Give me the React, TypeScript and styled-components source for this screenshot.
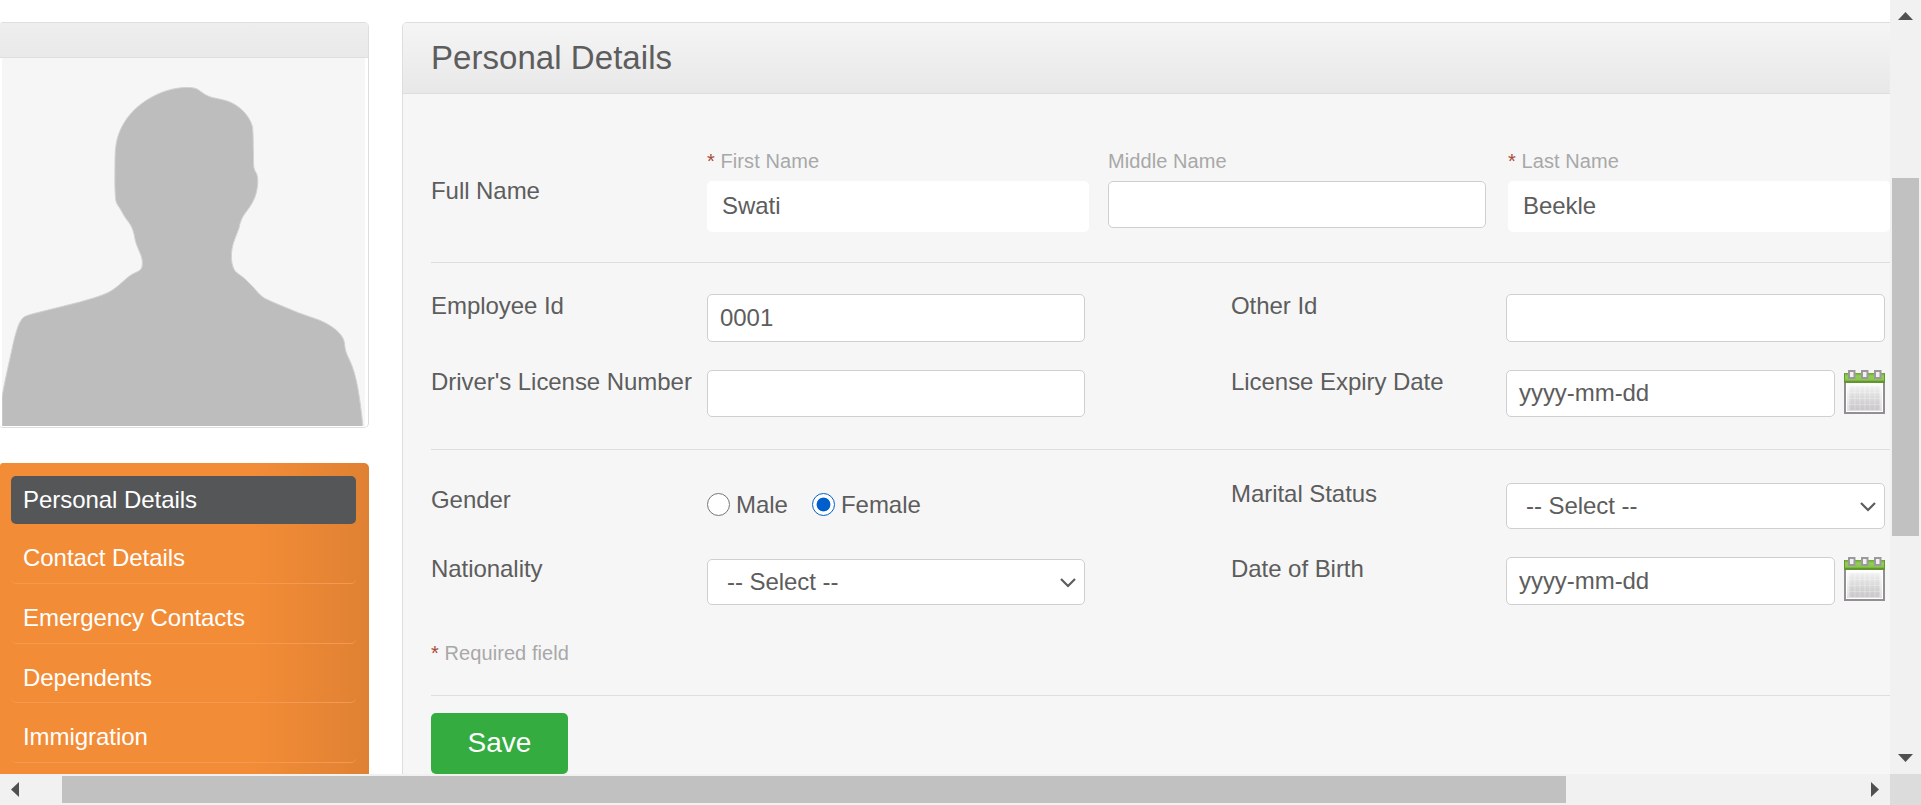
import React from 'react';
import styled, { createGlobalStyle } from 'styled-components';

const GlobalStyle = createGlobalStyle`
  * { box-sizing: border-box; }
  body {
    margin: 0;
    background: #fff;
    overflow: hidden;
    font-family: Arial, "Liberation Sans", sans-serif;
    font-size: 24px;
    line-height: 28px;
    letter-spacing: -0.05px;
    color: #5d5d5d;
  }
`;

const Viewport = styled.div`
  display: grid;
  grid-template-columns: 1890px 31px;
  grid-template-rows: 774px 31px;
  width: 1921px;
  height: 805px;
  overflow: hidden;
`;

const Page = styled.main`
  display: flex;
  align-items: flex-start;
  gap: 33px;
  padding-top: 22px;
  overflow: hidden;
`;

const Sidebar = styled.aside`
  flex: none;
  width: 369px;
`;

const PhotoCard = styled.section`
  height: 406px;
  margin-bottom: 35px;
  border: 1px solid #dedede;
  border-left: 0;
  border-radius: 3px 5px 5px 3px;
  background: #fff;
`;

const PhotoHeader = styled.div`
  height: 35px;
  border-bottom: 1px solid #dedede;
  border-radius: 2px 4px 0 0;
  background: linear-gradient(#eeeeee, #e9e9e9);
`;

const Photo = styled.svg`
  display: block;
  margin-left: 2px;
`;

const Menu = styled.nav`
  height: 420px;
  padding: 13px 13px 0 11px;
  border-radius: 3px 5px 0 0;
  background: linear-gradient(to right, #f38c37 0, #f38c37 252px, #df8133 369px);
`;

const MenuItem = styled.a<{ $active?: boolean }>`
  display: block;
  height: ${(p) => (p.$active ? '48px' : '59.8px')};
  padding: ${(p) => (p.$active ? '10px' : '20px')} 12px 0;
  border-bottom: ${(p) => (p.$active ? '0' : '1px solid #f49a50')};
  border-radius: 5px;
  background: ${(p) => (p.$active ? '#555658' : 'transparent')};
  color: #fff;
`;

const Panel = styled.section`
  flex: none;
  width: 1600px;
  height: 900px;
  border: 1px solid #dedede;
  border-radius: 5px 5px 0 0;
  background: #f6f6f6;
`;

const PanelTitle = styled.h1`
  height: 71px;
  margin: 0;
  padding: 16px 28px 0;
  border-bottom: 1px solid #dedede;
  border-radius: 4px 4px 0 0;
  background: linear-gradient(#f5f5f5, #e8e8e8);
  font-size: 33px;
  font-weight: 400;
  line-height: 38px;
  letter-spacing: 0.05px;
`;

const Form = styled.form`
  padding-left: 28px;
`;

const Section = styled.div<{ $height: number; $top: number }>`
  height: ${(p) => p.$height}px;
  padding-top: ${(p) => p.$top}px;
  border-bottom: 1px solid #dedede;
`;

const NameRow = styled.div`
  display: grid;
  grid-template-columns: 276px 401px 400px 382px;
`;

const FieldRow = styled.div<{ $height: number }>`
  display: grid;
  grid-template-columns: 276px 524px 275px 379px;
  height: ${(p) => p.$height}px;
`;

const Label = styled.label<{ $top?: number }>`
  padding-top: ${(p) => p.$top ?? 0}px;
  white-space: nowrap;
`;

const Field = styled.div<{ $top?: number }>`
  display: flex;
  align-items: flex-start;
  padding-top: ${(p) => p.$top ?? 2}px;
`;

const Hint = styled.div`
  height: 32px;
  font-size: 20px;
  line-height: 24px;
  letter-spacing: 0.08px;
  color: #a8a8a8;
`;

const Star = styled.em`
  color: #aa4935;
  font-style: normal;
`;

const TextInput = styled.input<{ $width?: number; $height?: number; $plain?: boolean }>`
  display: block;
  width: ${(p) => p.$width ?? 378}px;
  height: ${(p) => p.$height ?? 47}px;
  padding: ${(p) => (p.$plain ? '0 15px 2px' : p.$height ? '0 12px' : '0 12px 2px')};
  border: ${(p) => (p.$plain ? '0' : '1px solid #cfcfcf')};
  border-radius: 5px;
  outline: 0;
  background: #fff;
  color: #5d5d5d;
  font: inherit;
  letter-spacing: inherit;
`;

const SelectBox = styled.div<{ $width: number }>`
  display: grid;
  width: ${(p) => p.$width}px;
  align-items: center;
  & > * { grid-area: 1 / 1; }
`;

const Select = styled.select`
  width: 100%;
  height: 46px;
  padding: 0 19px;
  border: 1px solid #cfcfcf;
  border-radius: 5px;
  appearance: none;
  background: #fff;
  color: #5d5d5d;
  font: inherit;
  letter-spacing: inherit;
`;

const Chevron = styled.svg`
  justify-self: end;
  margin: 2px 9px 0 0;
  pointer-events: none;
`;

const Calendar = styled.svg`
  flex: none;
  margin-left: 9px;
`;

const Radio = styled.input`
  appearance: none;
  width: 23px;
  height: 23px;
  margin: 0 6px 0 0;
  border: 1px solid #767676;
  border-radius: 50%;
  background: #fff;
  &:checked {
    border-color: #005fcc;
    background: radial-gradient(circle, #005fcc 6.5px, #fff 7.3px);
  }
`;

const RadioText = styled.span<{ $width: number }>`
  width: ${(p) => p.$width}px;
  margin-top: -2px;
`;

const SaveButton = styled.button`
  display: block;
  width: 137px;
  height: 61px;
  margin-top: 17px;
  padding: 0 0 2px;
  border: 0;
  border-radius: 5px;
  background: #34ac40;
  color: #fff;
  font-family: inherit;
  font-size: 28px;
`;

const VerticalBar = styled.div`
  display: flex;
  flex-direction: column;
  align-items: center;
  justify-content: space-between;
  padding: 12px 0;
  background: #f1f1f1;
`;

const HorizontalBar = styled.div`
  display: flex;
  align-items: center;
  justify-content: space-between;
  padding: 0 11px;
  background: #f1f1f1;
`;

const VerticalThumb = styled.div`
  width: 27px;
  height: 358px;
  margin: 0 0 60px;
  background: #c1c1c1;
`;

const HorizontalThumb = styled.div`
  width: 1504px;
  height: 27px;
  margin-right: 262px;
  background: #c1c1c1;
`;

const BarCorner = styled.div`
  background: #dcdcdc;
`;

const Arrow = ({ points, w, h }: { points: string; w: number; h: number }) => (
  <svg width={w} height={h} fill="#505050">
    <polygon points={points} />
  </svg>
);

const CalendarIcon = () => (
  <Calendar width="41" height="44" viewBox="0 0 41 44">
    <defs>
      <linearGradient id="paper" x1="0" y1="0" x2="0" y2="1">
        <stop offset="0" stopColor="#fff" />
        <stop offset="1" stopColor="#dedcde" />
      </linearGradient>
      <linearGradient id="cells" x1="0" y1="0" x2="0" y2="1">
        <stop offset="0" stopColor="#b5b3b5" stopOpacity="0.1" />
        <stop offset="1" stopColor="#b5b3b5" stopOpacity="0.55" />
      </linearGradient>
      <linearGradient id="band" x1="0" y1="0" x2="0" y2="1">
        <stop offset="0" stopColor="#6fa335" />
        <stop offset=".3" stopColor="#92cd55" />
        <stop offset=".7" stopColor="#8ac74d" />
        <stop offset=".85" stopColor="#639530" />
        <stop offset="1" stopColor="#639530" />
      </linearGradient>
    </defs>
    <rect x="1" y="12" width="39" height="31" fill="url(#paper)" stroke="#918f91" strokeWidth="2" />
    <rect x="2.500" y="14" width="36" height="27.500" fill="none" stroke="#fff" strokeWidth="1" />
    <rect x="5" y="16" width="31" height="24" rx="2" fill="url(#cells)" opacity=".6" />
    {[6.500, 11.500, 16.500, 21.500, 26.500, 31.500].map((x) => (
      <rect key={x} x={x} y="16" width="3.500" height="24" rx="1.500" fill="url(#cells)" opacity=".55" />
    ))}
    {[22, 28, 34].map((y) => (
      <rect key={y} x="5" y={y} width="31" height="1" fill="#fff" opacity=".25" />
    ))}
    <rect x="0" y="3" width="41" height="10" fill="url(#band)" />
    <path d="M.5 3v10M40.500 3v10" stroke="#679535" />
    {[5, 18, 31].map((x) => (
      <rect key={x} x={x} y="1" width="5.500" height="7" fill="#f2f0f3" stroke="#9c999e" strokeWidth="2" />
    ))}
  </Calendar>
);

const Dropdown = ({ width = 378 }: { width?: number }) => (
  <SelectBox $width={width}>
    <Select>
      <option>-- Select --</option>
    </Select>
    <Chevron width="16" height="10" viewBox="0 0 16 10" fill="none" stroke="#5d5d5d" strokeWidth="2.200">
      <path d="M1 1l7 7 7-7" />
    </Chevron>
  </SelectBox>
);

const Avatar = () => (
  <Photo width="363" height="368" viewBox="2 58 363 368">
    <rect x="2" y="58" width="363" height="368" fill="#f6f6f6" />
    <path
      fill="#bdbdbd"
      stroke="#d2d2d2"
      strokeWidth="1"
      d="M2 427V397C5 380 9 363 12 349C15 335 18 324 22 319C24 316 29 315 34 313.500L80 302C93 298 106 295 114 289C120 285 126 278 131 275C136 272 141 271 142 267C143 262 142 257 140 253C138 248 136 244 135 239C134 233 133 229 130 224C127 220 124 216 122 212C119 206 115.500 204 115.500 197C114.500 187 115 172 115 160C115 143 118 133 124 123C131 111 143 101 156 95C166 90 177 87.500 187 87.500C192 87.500 197 88 200 91C204 94 207 96 212 97.500C219 99 226 100 232 103C242 108 250 117 252.500 127C253.500 136 253 145 253.500 155C253.500 161 253 167 255 171C258 175 258 180 257.500 186C256 198 252 204 246 212C242 217 240 222 239 228C237 234 233 242 232 249C231 256 231 265 235 271C239 275 244 277 248 282C254 287 258 294 264 298C274 303 287 308 299 313L319 320C331 325 343 333 344.500 343C345 351 347 355 350 361C357 376 360 399 363 427Z"
    />
  </Photo>
);

const menuItems = ['Personal Details', 'Contact Details', 'Emergency Contacts', 'Dependents', 'Immigration'];

export default function App() {
  return (
    <>
      <GlobalStyle />
      <Viewport>
        <Page>
          <Sidebar>
            <PhotoCard>
              <PhotoHeader />
              <Avatar />
            </PhotoCard>
            <Menu>
              {menuItems.map((item, i) => (
                <MenuItem key={item} $active={i === 0}>{item}</MenuItem>
              ))}
            </Menu>
          </Sidebar>
          <Panel>
            <PanelTitle>Personal Details</PanelTitle>
            <Form>
              <Section $height={169} $top={55}>
                <NameRow>
                  <Label $top={28}>Full Name</Label>
                  <div>
                    <Hint><Star>*</Star> First Name</Hint>
                    <TextInput $plain $width={382} $height={51} defaultValue="Swati" />
                  </div>
                  <div>
                    <Hint>Middle Name</Hint>
                    <TextInput />
                  </div>
                  <div>
                    <Hint><Star>*</Star> Last Name</Hint>
                    <TextInput $plain $width={382} $height={51} defaultValue="Beekle" />
                  </div>
                </NameRow>
              </Section>
              <Section $height={187} $top={29}>
                <FieldRow $height={76}>
                  <Label>Employee Id</Label>
                  <Field><TextInput $height={48} defaultValue="0001" /></Field>
                  <Label>Other Id</Label>
                  <Field><TextInput $width={379} $height={48} /></Field>
                </FieldRow>
                <FieldRow $height={76}>
                  <Label>Driver's License Number</Label>
                  <Field><TextInput /></Field>
                  <Label>License Expiry Date</Label>
                  <Field>
                    <TextInput $width={329} defaultValue="yyyy-mm-dd" />
                    <CalendarIcon />
                  </Field>
                </FieldRow>
              </Section>
              <Section $height={246} $top={30}>
                <FieldRow $height={75}>
                  <Label $top={6}>Gender</Label>
                  <Field $top={13}>
                    <Radio type="radio" name="gender" id="male" />
                    <RadioText $width={76}>Male</RadioText>
                    <Radio type="radio" name="gender" id="female" defaultChecked />
                    <RadioText $width={90}>Female</RadioText>
                  </Field>
                  <Label>Marital Status</Label>
                  <Field $top={3}><Dropdown width={379} /></Field>
                </FieldRow>
                <FieldRow $height={86}>
                  <Label>Nationality</Label>
                  <Field $top={4}><Dropdown /></Field>
                  <Label>Date of Birth</Label>
                  <Field>
                    <TextInput $width={329} $height={48} defaultValue="yyyy-mm-dd" />
                    <CalendarIcon />
                  </Field>
                </FieldRow>
                <Hint><Star>*</Star> Required field</Hint>
              </Section>
              <SaveButton type="button">Save</SaveButton>
            </Form>
          </Panel>
        </Page>
        <VerticalBar>
          <Arrow w={15} h={8} points="0,8 7.5,0 15,8" />
          <VerticalThumb />
          <Arrow w={15} h={8} points="0,0 7.5,8 15,0" />
        </VerticalBar>
        <HorizontalBar>
          <Arrow w={8} h={15} points="8,0 0,7.5 8,15" />
          <HorizontalThumb />
          <Arrow w={8} h={15} points="0,0 8,7.5 0,15" />
        </HorizontalBar>
        <BarCorner />
      </Viewport>
    </>
  );
}
